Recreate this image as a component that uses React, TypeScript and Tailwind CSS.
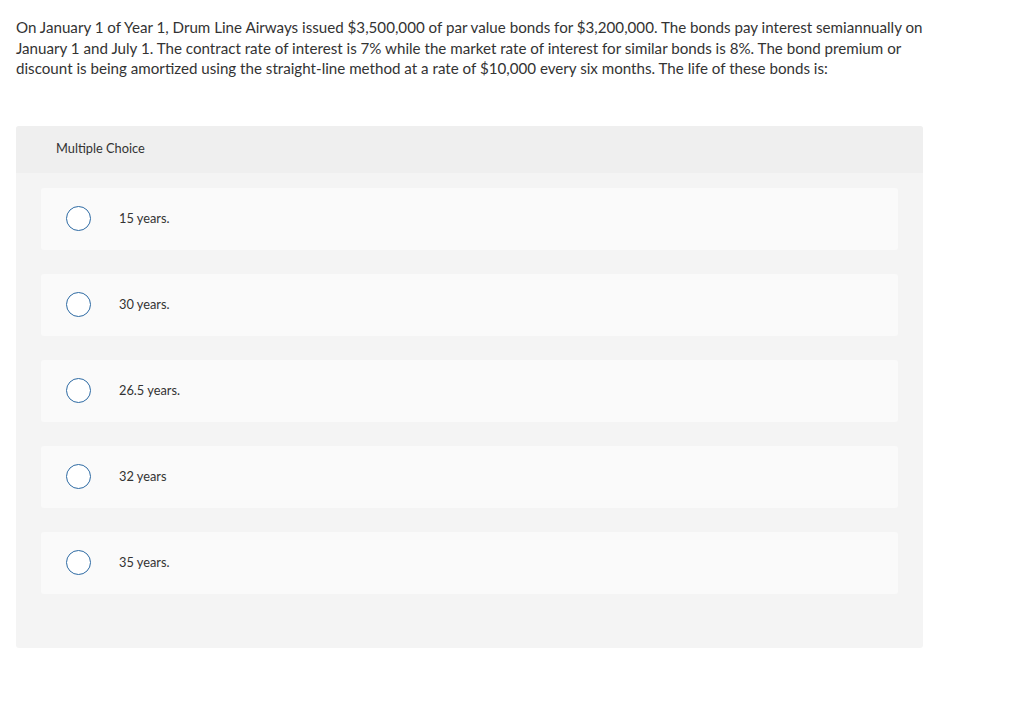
import React from "react";

const options = ["15 years.", "30 years.", "26.5 years.", "32 years", "35 years."];

export default function App() {
  return (
    <div
      className="min-h-[714px] bg-white text-[#333]"
      style={{ fontFamily: '"Lato", "Open Sans", sans-serif' }}
    >
      <div className="whitespace-nowrap px-4 pt-[17px] text-[15.15px] leading-[20.5px] text-[#333]">
        On January 1 of Year 1, Drum Line Airways issued $3,500,000 of par value bonds for $3,200,000. The bonds
        pay interest semiannually on
        <br />
        January 1 and July 1. The contract rate of interest is 7% while the market rate of interest for similar
        bonds is 8%. The bond premium or
        <br />
        discount is being amortized using the straight-line method at a rate of $10,000 every six months. The life
        of these bonds is:
      </div>

      <div className="ml-4 mt-[47px] w-[907px] rounded-[3px] bg-[#f4f4f4] pb-[54px]">
        <div className="flex h-[47px] items-center rounded-t-[3px] bg-[#efefef] pl-[40px] text-[12.8px] text-[#333]">
          Multiple Choice
        </div>
        <div className="flex flex-col gap-[24px] px-[25px] pt-[15px]">
          {options.map((o) => (
            <div key={o} className="flex h-[62px] items-center rounded-[3px] bg-[#fafafa]">
              <div className="ml-[25px] h-[25px] w-[25px] rounded-full border border-[#2d6aa3] bg-white" />
              <span className="ml-[28px] text-[12.8px] text-[#333]">{o}</span>
            </div>
          ))}
        </div>
      </div>
    </div>
  );
}
